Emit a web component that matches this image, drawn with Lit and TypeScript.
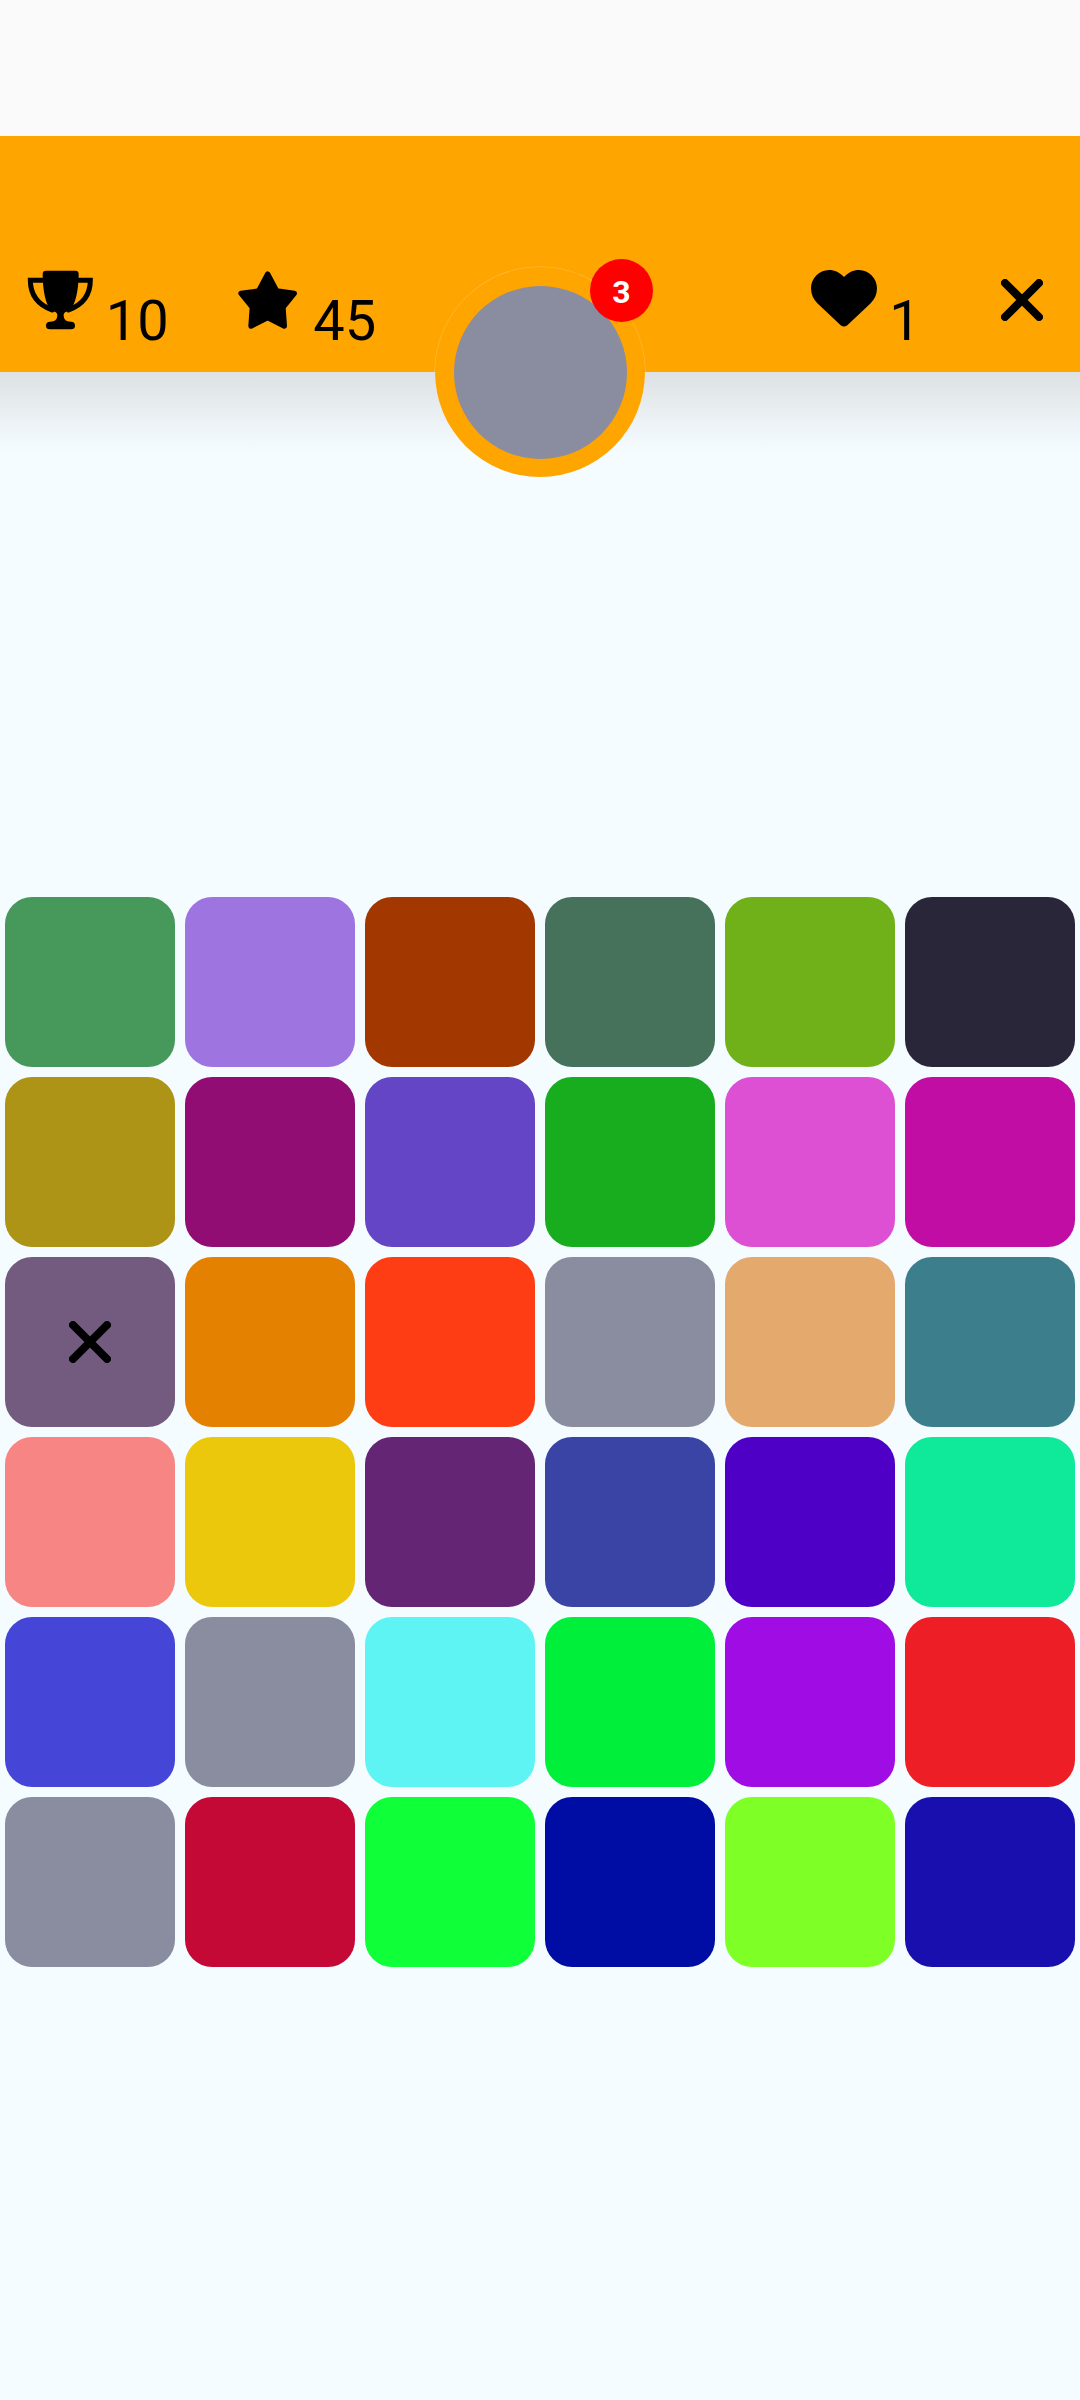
import { LitElement, html, css, svg } from "lit";
import { customElement } from "lit/decorators.js";

const GREY = "#8a8c9f";
const COLORS = [
  "#46995b", "#9e75e0", "#a33700", "#46715a", "#70b11a", "#292639",
  "#ad9416", "#910d74", "#6345c5", "#17ad1e", "#de50d3", "#c20da5",
  "#725b7f", "#e48100", "#ff3d14", GREY, "#e4a96c", "#3d7e8d",
  "#f78583", "#ecc80d", "#652575", "#3a44a4", "#4f00c7", "#0fe99a",
  "#4545d8", GREY, "#5ef4f4", "#00ef3b", "#9f0ce4", "#ee1e27",
  GREY, "#c50937", "#0fff39", "#000da4", "#7eff25", "#190faf",
];

const closeIcon = html`<svg class="close" viewBox="0 0 42 42">
  <path d="M4 4 L38 38 M38 4 L4 38" stroke="#000" stroke-width="8" stroke-linecap="round" fill="none"/>
</svg>`;

const trophy = html`<svg class="trophy" viewBox="80 120 200 180">
  ${svg`<path d="M137 122 H225 Q235 122 235 132 C235 180 225 225 210 238 C200 246 190 246 190 255 C190 268 196 275 212 275 Q224 275 224 286.500 Q224 298 212 298 H149 Q137 298 137 286.500 Q137 275 149 275 C165 275 171 268 171 255 C171 246 161 246 151 238 C136 225 127 180 127 132 Q127 122 137 122 Z" fill="#000"/>
  <path d="M130 151 H90 C90 195 115 225 155 240 M232 151 H270 C270 195 245 225 205 240" stroke="#000" stroke-width="15" stroke-linecap="round" fill="none"/>`}
</svg>`;

const star = html`<svg class="star" viewBox="710 120 185 180">
  ${svg`<polygon points="802,132 829,183 882,190 848,232 852,288 802,263 752,288 756,232 722,190 775,183" fill="#000" stroke="#000" stroke-width="16" stroke-linejoin="round"/>`}
</svg>`;

const heart = html`<svg class="heart" viewBox="93 127 198 171">
  ${svg`<path d="M192 148 C175 130 160 127 147 127 C117 127 93 152 93 182 C93 200 100 215 112 227 L182 293 Q192 300 202 293 L272 227 C284 215 291 200 291 182 C291 152 267 127 237 127 C224 127 209 130 192 148 Z" fill="#000"/>`}
</svg>`;

@customElement("app-root")
export class AppRoot extends LitElement {
  static styles = css`
    :host {
      display: block;
      position: relative;
      width: 1080px;
      height: 2400px;
      background: #f5fcff;
      font-family: Roboto, "Liberation Sans", sans-serif;
      overflow: hidden;
    }
    .status {
      height: 136px;
      background: #fafafa;
    }
    .bar {
      height: 236px;
      background: #ffa500;
      display: flex;
      align-items: flex-start;
      box-sizing: border-box;
      padding: 134px 0 0 27px;
    }
    .stat {
      display: flex;
      align-items: flex-start;
    }
    .num {
      font-size: 56px;
      font-weight: 400;
      line-height: 66px;
      margin-top: 18px;
      color: #000;
    }
    svg { display: block; }
    .trophy { width: 66.67px; height: 60px; flex: none; }
    .star { width: 61.67px; height: 60px; flex: none; }
    .heart { width: 66px; height: 57px; flex: none; }
    .close { width: 42px; height: 42px; flex: none; }
    .stat-trophy .num { margin-left: 12px; }
    .stat-star { margin-left: 68px; }
    .stat-star .num { margin-left: 15px; }
    .stat-heart { margin-left: 435px; }
    .stat-heart .num { margin-left: 12px; }
    .bar .close { margin-left: 80px; margin-top: 9px; }
    .shade {
      height: 80px;
      background: linear-gradient(#dde1e4, #f5fcff);
    }
    .avatar {
      position: absolute;
      left: 435px;
      top: 267px;
      width: 210px;
      height: 210px;
      box-sizing: border-box;
      border-radius: 50%;
      background: #ffa500;
      box-shadow: 0 0 0 0.5px rgba(255, 255, 255, 0.3);
      display: flex;
      align-items: center;
      justify-content: center;
    }
    .face {
      width: 173px;
      height: 173px;
      border-radius: 50%;
      background: #8a8c9f;
    }
    .badge {
      position: absolute;
      left: 590px;
      top: 259px;
      width: 63px;
      height: 63px;
      border-radius: 50%;
      background: #ff0000;
      color: #fff;
      font-size: 32px;
      font-weight: 700;
      line-height: 66px;
      text-align: center;
    }
    .grid {
      display: grid;
      grid-template-columns: repeat(6, 170px);
      grid-auto-rows: 170px;
      gap: 10px;
      padding: 445px 5px 0;
    }
    .cell {
      border-radius: 27px;
      display: flex;
      align-items: center;
      justify-content: center;
    }
  `;

  render() {
    return html`
      <div class="status"></div>
      <div class="bar">
        <div class="stat stat-trophy">${trophy}<span class="num">10</span></div>
        <div class="stat stat-star">${star}<span class="num">45</span></div>
        <div class="stat stat-heart">${heart}<span class="num">1</span></div>
        ${closeIcon}
      </div>
      <div class="shade"></div>
      <div class="avatar"><div class="face"></div></div>
      <div class="badge">3</div>
      <div class="grid">
        ${COLORS.map(
          (c, i) => html`<div class="cell" style="background:${c}">${i === 12 ? closeIcon : ""}</div>`
        )}
      </div>
    `;
  }
}
